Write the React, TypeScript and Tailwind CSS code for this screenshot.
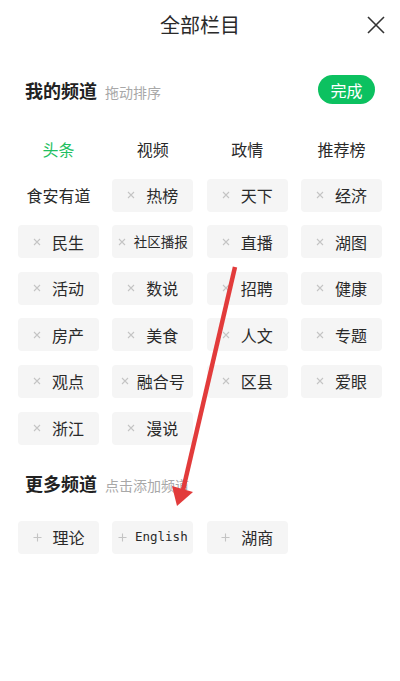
import React from "react";

const Cross = () => (
  <svg width="8" height="8" viewBox="0 0 8 8" className="shrink-0">
    <path d="M1 1L7 7M7 1L1 7" stroke="#c4c4c4" strokeWidth="1.1" />
  </svg>
);

const Plus = () => (
  <svg width="9" height="9" viewBox="0 0 9 9" className="shrink-0">
    <path d="M4.5 0.5V8.5M0.5 4.5H8.5" stroke="#c4c4c4" strokeWidth="1.1" />
  </svg>
);

type Item = { t: string; kind: "plain" | "green" | "del" | "add"; small?: boolean; mono?: boolean };

const mine: Item[] = [
  { t: "头条", kind: "green" },
  { t: "视频", kind: "plain" },
  { t: "政情", kind: "plain" },
  { t: "推荐榜", kind: "plain" },
  { t: "食安有道", kind: "plain" },
  { t: "热榜", kind: "del" },
  { t: "天下", kind: "del" },
  { t: "经济", kind: "del" },
  { t: "民生", kind: "del" },
  { t: "社区播报", kind: "del", small: true },
  { t: "直播", kind: "del" },
  { t: "湖图", kind: "del" },
  { t: "活动", kind: "del" },
  { t: "数说", kind: "del" },
  { t: "招聘", kind: "del" },
  { t: "健康", kind: "del" },
  { t: "房产", kind: "del" },
  { t: "美食", kind: "del" },
  { t: "人文", kind: "del" },
  { t: "专题", kind: "del" },
  { t: "观点", kind: "del" },
  { t: "融合号", kind: "del" },
  { t: "区县", kind: "del" },
  { t: "爱眼", kind: "del" },
  { t: "浙江", kind: "del" },
  { t: "漫说", kind: "del" },
];

const more: Item[] = [
  { t: "理论", kind: "add" },
  { t: "English", kind: "add", mono: true },
  { t: "湖商", kind: "add" },
];

const Tile = ({ it }: { it: Item }) => {
  const boxed = it.kind === "del" || it.kind === "add";
  const gap = it.small || it.mono ? "gap-[8px]" : it.t.length === 3 ? "gap-[8px]" : "gap-[11px]";
  return (
    <div
      className={`h-[33px] flex items-center justify-center ${gap} rounded-[4px] ${
        boxed ? "bg-[#f5f5f5]" : ""
      }`}
    >
      {it.kind === "del" && <Cross />}
      {it.kind === "add" && <Plus />}
      <span
        className={`${
          it.mono
            ? "font-['DejaVu_Sans_Mono',monospace] text-[12.5px]"
            : it.small
            ? "text-[13.5px]"
            : "text-[16px]"
        } leading-none ${it.kind === "green" ? "text-[#1fbf62]" : "text-[#2a2a2a]"}`}
      >
        {it.t}
      </span>
    </div>
  );
};

export default function App() {
  return (
    <div className="relative w-[400px] h-[681px] bg-white font-['Noto_Sans_CJK_SC','Noto_Sans',sans-serif] overflow-hidden">
      <div className="grid grid-cols-[1fr_auto_1fr] items-center h-[48px] pt-[2px]">
        <div />
        <div className="text-[20px] text-[#2a2a2a] leading-none">全部栏目</div>
        <div className="flex justify-end pr-[14px]">
          <svg width="20" height="20" viewBox="0 0 20 20">
            <path d="M2 2L18 18M18 2L2 18" stroke="#333" strokeWidth="1.6" />
          </svg>
        </div>
      </div>

      <div className="flex items-center justify-between px-[25px] mt-[27px] h-[29px]">
        <div className="flex items-end gap-[8px]">
          <span className="text-[18px] font-bold text-[#222] leading-none">我的频道</span>
          <span className="text-[14px] text-[#a8a8a8] leading-none">拖动排序</span>
        </div>
        <div className="h-[29px] w-[57px] rounded-full bg-[#0cc160] flex items-center justify-center text-white text-[16px] leading-none">
          完成
        </div>
      </div>

      <div className="grid grid-cols-4 gap-x-[13.3px] gap-y-[13.6px] px-[18px] mt-[28px]">
        {mine.map((it) => (
          <Tile key={it.t} it={it} />
        ))}
      </div>

      <div className="flex items-end gap-[8px] px-[25px] mt-[23px] h-[24px]">
        <span className="text-[18px] font-bold text-[#222] leading-none">更多频道</span>
        <span className="text-[14px] text-[#a8a8a8] leading-none">点击添加频道</span>
      </div>

      <div className="grid grid-cols-4 gap-x-[13.3px] px-[18px] mt-[29px]">
        {more.map((it) => (
          <Tile key={it.t} it={it} />
        ))}
      </div>

      <svg className="absolute inset-0 pointer-events-none" width="400" height="681" viewBox="0 0 400 681">
        <path d="M235 267L183 490" stroke="#e23b3b" strokeWidth="4.5" />
        <path d="M177 506L172 486L193 492Z" fill="#e23b3b" />
      </svg>
    </div>
  );
}
